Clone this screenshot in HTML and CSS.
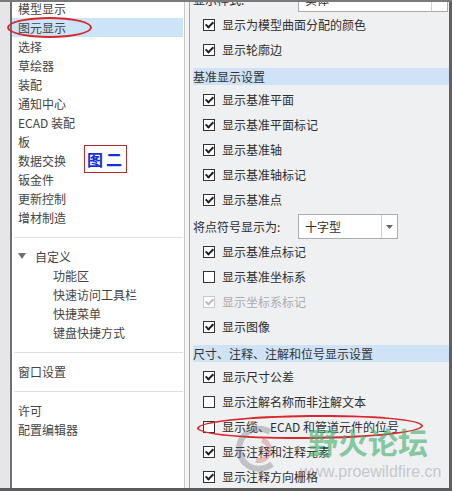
FILE: index.html
```html
<!DOCTYPE html>
<html lang="zh-CN">
<head>
    <meta charset="UTF-8">
    <title>图元显示</title>
    <link rel="stylesheet" href="styles.css">
</head>
<body>

    <div class="window">
        <div class="edge"></div>

        <nav class="nav">
            <ul class="nav-list first">
                <li>模型显示</li>
                <li class="active">图元显示</li>
                <li>选择</li>
                <li>草绘器</li>
                <li>装配</li>
                <li>通知中心</li>
                <li>ECAD 装配</li>
                <li>板</li>
                <li>数据交换</li>
                <li>钣金件</li>
                <li>更新控制</li>
                <li>增材制造</li>
            </ul>
            <div class="sep"></div>
            <div class="tree-head">
                <svg class="caret" width="8" height="6" viewBox="0 0 8 6"><path d="M0 0H8L4 6Z" fill="#707070"/></svg>
                自定义
            </div>
            <ul class="nav-list sub">
                <li>功能区</li>
                <li>快速访问工具栏</li>
                <li>快捷菜单</li>
                <li>键盘快捷方式</li>
            </ul>
            <div class="sep"></div>
            <ul class="nav-list">
                <li>窗口设置</li>
            </ul>
            <div class="sep"></div>
            <ul class="nav-list">
                <li>许可</li>
                <li>配置编辑器</li>
            </ul>
        </nav>

        <div class="split"></div>

        <main class="panel">
            <div class="combo-row top">
                <span class="label">显示样式:</span>
                <div class="combo wide">
                    <span class="val">实体</span>
                    <span class="arrow"></span>
                </div>
            </div>
            <div class="row"><span class="cb on"></span>显示为模型曲面分配的颜色</div>
            <div class="row"><span class="cb on"></span>显示轮廓边</div>

            <div class="head">基准显示设置</div>
            <div class="row"><span class="cb on"></span>显示基准平面</div>
            <div class="row"><span class="cb on"></span>显示基准平面标记</div>
            <div class="row"><span class="cb on"></span>显示基准轴</div>
            <div class="row"><span class="cb on"></span>显示基准轴标记</div>
            <div class="row"><span class="cb on"></span>显示基准点</div>
            <div class="combo-row">
                <span class="label">将点符号显示为:</span>
                <div class="combo">
                    <span class="val">十字型</span>
                    <span class="arrow"><svg width="7" height="4" viewBox="0 0 7 4"><path d="M0 0H7L3.5 4Z" fill="#666"/></svg></span>
                </div>
            </div>
            <div class="row"><span class="cb on"></span>显示基准点标记</div>
            <div class="row"><span class="cb"></span>显示基准坐标系</div>
            <div class="row disabled"><span class="cb on"></span>显示坐标系标记</div>
            <div class="row"><span class="cb on"></span>显示图像</div>

            <div class="head">尺寸、注释、注解和位号显示设置</div>
            <div class="row"><span class="cb on"></span>显示尺寸公差</div>
            <div class="row"><span class="cb"></span>显示注解名称而非注解文本</div>
            <div class="row"><span class="cb"></span>显示缆、ECAD 和管道元件的位号</div>
            <div class="row"><span class="cb on"></span>显示注释和注释元素</div>
            <div class="row"><span class="cb on"></span>显示注释方向栅格</div>
        </main>

        <!-- marks drawn over the screenshot -->
        <div class="ring ring-nav"></div>
        <div class="tag">图二</div>
        <div class="ring ring-opt"></div>

        <svg class="wm-logo" width="64" height="64" viewBox="0 0 64 64">
            <path d="M44 14 A20 20 0 1 0 46 46" fill="none" stroke="rgba(110,110,120,0.35)" stroke-width="6"/>
            <path d="M36 22 A10 10 0 1 1 30 42" fill="none" stroke="rgba(200,70,70,0.3)" stroke-width="5"/>
        </svg>
        <div class="wm-text">野火论坛</div>
        <div class="wm-url">www.proewildfire.cn</div>
    </div>

</body>
</html>
```

FILE: styles.css
```css
body {
    margin: 0;
    font-family: "Noto Sans CJK SC", "Noto Sans", sans-serif;
    font-size: 12px;
    color: #333;
}

.window {
    position: relative;
    display: flex;
    width: 452px;
    height: 491px;
    box-sizing: border-box;
    border-top: 2px solid #7a7a7a;
    border-bottom: 3px solid #5c5c5c;
    overflow: hidden;
}

.edge {
    flex: none;
    width: 10px;
    background-color: #e6e6e8;
    border-right: 2px solid #6f6f6f;
}

/* left navigation */
.nav {
    flex: none;
    width: 172px;
    background-color: #fff;
    border-right: 1px solid #c8c8c8;
    color: #444;
}

.nav-list {
    list-style: none;
    margin: 0;
    padding: 0;
}

.nav-list.first {
    margin-top: -3.5px;
}

.nav-list li {
    height: 19px;
    line-height: 19px;
    padding-left: 6px;
    white-space: nowrap;
}

.nav-list li.active {
    background-color: #cce4f7;
    margin-right: 1px;
}

.nav-list.sub li {
    padding-left: 41px;
}

.sep {
    height: 1px;
    background-color: #e0e0e0;
    margin: 10px 1px 9px 2px;
}

.tree-head {
    display: flex;
    align-items: center;
    height: 19px;
    padding-left: 6px;
}

.caret {
    margin-right: 9px;
}

.split {
    flex: none;
    width: 4px;
    background-color: #f6f6f6;
}

/* right options panel */
.panel {
    flex: 1;
    background-color: #eff0f2;
    border-left: 1px solid #a3a3a3;
    border-right: 3px solid #606060;
    color: #2e2e2e;
}

.row {
    display: flex;
    align-items: center;
    height: 25px;
    padding-left: 13px;
    white-space: nowrap;
}

.cb {
    position: relative;
    flex: none;
    width: 10px;
    height: 10px;
    margin-right: 7px;
    border: 1px solid #333;
    background-color: #fff;
}

.cb.on::after {
    content: "";
    position: absolute;
    left: 3px;
    top: 0;
    width: 3px;
    height: 6px;
    border: solid #1e1e1e;
    border-width: 0 2px 2px 0;
    transform: rotate(45deg);
}

.row.disabled {
    color: #ababab;
}

.row.disabled .cb {
    border-color: #c8c8c8;
}

.row.disabled .cb::after {
    border-color: #b8b8b8;
}

.head {
    height: 17px;
    line-height: 17px;
    margin: 6px 0 2px 3px;
    background-color: #cfe2f6;
    color: #333;
    white-space: nowrap;
}

.combo-row {
    display: flex;
    align-items: center;
    height: 27px;
    padding: 2px 0 0 3px;
    box-sizing: border-box;
}

.combo-row.top {
    margin-top: -16px;
    height: 26px;
    padding-top: 0;
}

.combo-row .label {
    width: 105px;
    flex: none;
    white-space: nowrap;
}

.combo {
    display: flex;
    width: 98px;
    height: 23px;
    border: 1px solid #acacac;
    background-color: #fff;
}

.combo.wide {
    width: 148px;
}

.combo .val {
    flex: 1;
    padding-left: 6px;
    line-height: 23px;
}

.combo .arrow {
    display: flex;
    align-items: center;
    justify-content: center;
    width: 15px;
    border-left: 1px solid #d0d0d0;
}

/* annotations over the screenshot */
.ring {
    position: absolute;
    border: 2px solid #d8262b;
    border-radius: 50%;
}

.ring-nav {
    left: 7px;
    top: 15px;
    width: 81px;
    height: 17px;
}

.ring-opt {
    left: 197px;
    top: 413px;
    width: 222px;
    height: 20px;
    transform: rotate(-0.6deg);
}

.tag {
    position: absolute;
    left: 84px;
    top: 143px;
    width: 43px;
    height: 28px;
    display: flex;
    align-items: center;
    padding-left: 2px;
    box-sizing: border-box;
    border: 1px solid #b03030;
    background-color: #fff;
    color: #1530d8;
    font-size: 16px;
    font-weight: bold;
    letter-spacing: 3px;
}

.wm-logo {
    position: absolute;
    left: 226px;
    top: 416px;
}

.wm-text {
    position: absolute;
    left: 308px;
    top: 424px;
    font-size: 30px;
    line-height: 30px;
    font-weight: bold;
    color: rgba(70, 175, 110, 0.65);
}

.wm-url {
    position: absolute;
    left: 300px;
    top: 461px;
    font-family: "Liberation Sans", sans-serif;
    font-size: 16px;
    color: rgba(130, 130, 145, 0.4);
}
```
